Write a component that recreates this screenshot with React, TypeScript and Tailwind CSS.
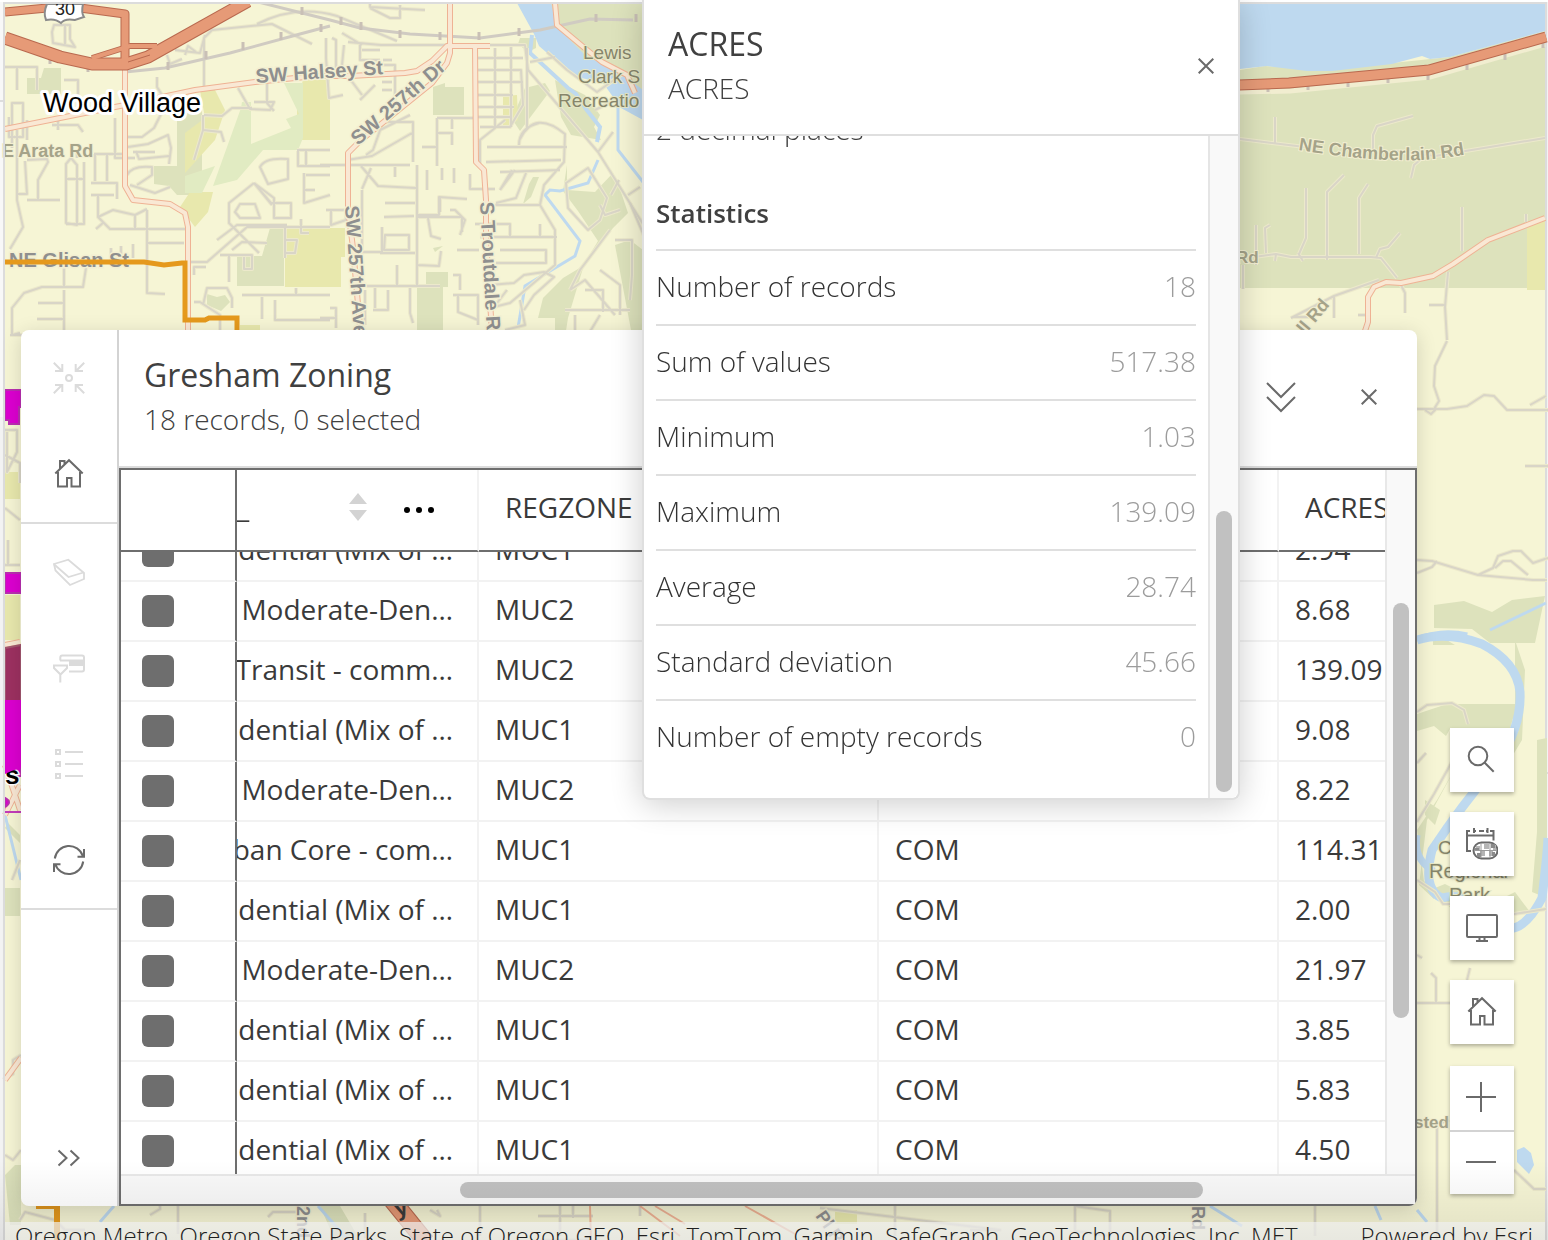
import React, { useLayoutEffect, useRef } from "react";

type IconProps = { children: React.ReactNode; size?: number };

function Icon({ children, size = 32 }: IconProps) {
  return (
    <svg
      width={size}
      height={size}
      viewBox={`0 0 ${size} ${size}`}
      fill="none"
      stroke="currentColor"
      strokeWidth="2"
      aria-hidden="true"
      className="shrink-0"
    >
      {children}
    </svg>
  );
}

const ZoomToIcon = () => (
  <Icon>
    <path d="M.8.8 9 9M2 9h7.300V2M31.200.8 23 9M30 9h-7.300V2M.8 31.200 9 23M2 23h7.300v7M31.200 31.200 23 23M30 23h-7.300v7" />
    <circle cx="16" cy="16" r="3" />
  </Icon>
);
const HomeIcon = () => (
  <Icon>
    <path d="M2.300 15.500 16 2.200l13.700 13.300M5 14v14.500h9V20h4.500v8.500H27V14M7 11V3h4.500v3.500" />
  </Icon>
);
const EraserIcon = () => (
  <Icon>
    <path d="m1 8 14.300-4.300 15.700 13.300v6L17 29 2.500 14.500z" strokeWidth="1.800" />
    <path d="M1 8.300 15.500 21 30.500 16.500" strokeWidth="1.800" />
  </Icon>
);
const FilterTableIcon = () => (
  <Icon>
    <path d="M7.300 8.500V5.500q0-2 2-2H29q2 0 2 2v12q0 2-2 2H16" />
    <path d="M16 9h15v5H16zM7 7.500h24v2H7z" fill="currentColor" stroke="none" />
    <path d="M1 13.500h13v2.500L7.500 22.500 1 16zM7.300 22v8.500" />
  </Icon>
);
const ListIcon = () => (
  <Icon>
    <path d="M3 2h4v4H3zM3 14h4v4H3zM3 26h4v4H3zM12 4h18M12 16h18M12 28h18" />
  </Icon>
);
const RefreshIcon = () => (
  <Icon>
    <path d="M1.800 14.500a14.400 14.400 0 0 1 28-2.500M30.200 17.500a14.400 14.400 0 0 1-28 2.500M31 5v7.800h-6.500M1 28v-7.800h6.500" />
  </Icon>
);
const CloseIcon = () => (
  <Icon size={16}>
    <path d="m.7.7 14.600 14.600M15.300.7.7 15.300" />
  </Icon>
);
const ExpandIcon = () => (
  <Icon size={24}>
    <path d="m1.500 4.500 8 7.500-8 7.500M13.500 4.500l8 7.500-8 7.500" />
  </Icon>
);
const CollapseDownIcon = () => (
  <Icon>
    <path d="M2 2 16 16 30 2M2 16l14 14 14-14" />
  </Icon>
);
const SearchIcon = () => (
  <Icon>
    <circle cx="12" cy="12" r="9.300" />
    <path d="m18.500 18.500 9.200 9.200" />
  </Icon>
);
const CalendarGlobeIcon = () => (
  <Icon>
    <path d="M5 23H1V3h3M8 3h2M13 3h5M20 3h2M24 3h3.500v9.500M1 7.500h26.500M8 0v5M21.500 0v5" />
    <rect x="7.500" y="14.500" width="24" height="16" rx="8" fill="#fff" />
    <path d="M10 18h4v4h-4zM18 16h5v5h-5zM27 17h3v5h-3zM14 23h5v5h-5zM23 22h4v6h-4z" fill="#b5b5b5" stroke="none" />
    <path d="M8 20h5v3H8zM11 25h4v4h-4zM25 16h4v4h-4zM26 24h3v4h-3z" fill="#8a8a8a" stroke="none" />
    <path d="M8 22.500h23M15 15v15M24 15v15" stroke="#9a9a9a" strokeWidth="1" />
  </Icon>
);
const MonitorIcon = () => (
  <Icon>
    <rect x="1" y="3" width="30" height="22" rx="1" />
    <path d="M13.500 25v4M18.500 25v4M10 29h12" />
  </Icon>
);
const PlusIcon = () => (
  <Icon>
    <path d="M0 15h30M15 0v30" />
  </Icon>
);
const MinusIcon = () => (
  <Icon>
    <path d="M0 15h30" />
  </Icon>
);

const minorRoads = [
  "M5 67h32v23M17 68v22M12 148v-45h11v34H9v-20M52 32l2-7h16v14l5 8-22-4zM65 24v20",
  "M64 80h14v26M17 130v70l6 27-13 22M27 160l20-1 1 3-10 18 0 20M17 194h10l-2-33M27 200h33M66 223v-59l5-6 6 7v60zM66 179h17M77 158v-8",
  "M84 162v62H66M94 154h28M95 154v27M107 154v27M91 183h26l0 16M91 195h23M98 195v22l12 12h75M98 217l15-7 22 5v13M135 215l12-6M96 229l8-7M147 210v83l18 1M148 243h36M111 248v14M121 246v14M133 244v14M133 152h22M127 137h15l12-9 9-18-10 0M157 77v10l10 16M128 147l20-3 20-9 3 13-2 16M136 151l3 8 30-3M127 175q5-10 25-8v8l-15 10M130 185l25 8 15-6M64 265v22M86 268l-3 19H42l-18 6-12 15v27M38 303h26M64 290v42M37 319h27M10 335h26M115 118v40h20M52 125h26l5 7M58 118v12M27 120v20",
  "M175 50l25 3 5-18M167 55l3 9 12-5M185 55l3-9 8 6M204 88V38l8-8 60-6 40 20M257 24q40-20 80-8l60 25M238 88l12 21 20 1 4-8h-20M267 83v20l7 8M204 115l18 1 10-8h20M203 115v15l-9 30M203 130l18 2 3 10M254 183l-25 20v20l30 30M254 183l20 15v20h17v-15h-20l-17-20M254 183l18 22M235 212l5-8h15l5 14h-20zM260 167q5-10 28-8v20l-20 5-8-17zM297 150h33M298 151v15h32M306 150v15M304 173v30l26-8M304 190h11M306 175h24M187 262h20l40-35h83M217 240l20-15h50M232 250l10-8 25 1M220 255h32v14h-8v-12M229 255v27M285 228v30M285 240h12l-2 13h-10M301 219v14h8M194 275v-8h12M194 302h6l20 13v15M203 305l4-17h20l5 10v10M242 295h88M262 297v22M275 300v20h55M296 288v7M12 335l8-2",
  "M348 42l33 3h144l3 25 70 82 50 80M342 33l20 12M360 45v15h20M380 50h-18M326 38v20l3 40 14-3M332 38l4 2v28M341 75l3-30M380 65h15v35M382 75h10M382 82h10M382 90h10M347 75l15 20M425 10l-55-3v-7M370 8l20 10h10V5M360 100l15-15M383 60h9M495 48v80M511 47v80M527 48v80M475 58h48M475 70h46l2 35-13 22h-30M478 82h45M478 95h35M474 107h40M475 117h35",
  "M520 139q15-30 45-5l-1 28-20 23-4 20 15 25v35l-45 38-20 5M487 147h80M486 162l75-2M480 165v-25l25-20M519 145q0-17 20-22M500 172l60-2M512 170l-12 20M540 205h-45M470 174v15h25M500 190l15-20M526 173l-10 25-20 5M475 224h35v14M480 237h77M500 250h46v13h-50M540 224v12M457 250h22M453 275h7v15M453 295h25v30M458 295v17l20 8M490 285l24-2 10-8 20-3 10 5-20 18-10 15M520 300l5 25-20 5M507 290l-10 13",
  "M320 165h90M417 165v120M366 155l7-5 10-28h30v40M380 130l30-15M347 160l25-4 40-23M437 118v48M437 133h15v12M437 147h-15M437 118h40M452 117v12M362 189l9-21M361 166l17 20 38 2M427 170v20M442 168v12M454 168v15M395 167v10M417 215h22v-18l28 2M440 197v15M417 217h45v15M428 218l3 18 10 3M450 210l5 0 10 10-5 15M362 190v62h20v-25M385 235h24v15h-25zM384 217l30-1M385 203h30M380 253h35M364 286h76M417 265l22 1 2-15M365 290v35M375 288v20M388 290v20h-15M397 265v20M410 288v25l3 10M330 308h6v20M336 318h-16M320 340h15M326 210h20v10l-15 5v-15",
  "M530 62l25-5M625 72l-28 20-30-22-20-18M595 110l20-10M598 152l15-20M619 180l-8 15M607 198l-19-30-22 15 2 25 20 22 12-10zM600 205l5 10 15-5M610 230l-30 40-10 20M615 240h17v35l-2 25M600 270l20 15v30M585 290h18v22M570 290l15-10 30 35M565 310h65M575 315v25M600 315l-15 25M628 195l12-8M630 203l15 35",
  "M1240 139l65 8M1275 117v26M1373 149v-14l4-9 36-10M1395 151l40 5 55-9 55-9M1420 160l-6 5-3 13M1306 188v50l-7 16M1327 260v-68l17-17M1359 254v-56l9-14M1376 258l4-9 8-2 12-14M1254 257l22-3 15 3h80l10 1 16 20M1266 253l-1-25 5-3M1256 225v40M1298 253l5 8M1276 254l-1 7M1400 283l5 10v20M1462 251v-44M1448 272l-3 35 2 33M1429 305h16M1526 222v-8M1291 318l43-22 45-16M1334 296v22M1294 317h16M1358 315h8M1243 265v24",
  "M1417 409h30l20-3 17-11 10 1 13 14h41M1447 341l-12 25-1 20 5 15-5 8M1425 410l6 4 6-6M1530 405l16-9M1525 466h23M1417 560l15 1 46 14 55 5h14M1478 575l15-7 5-12 15-5h8l12 12 15-5M1495 568l8-7 8 0 17 14M1417 573l15-6 5-6M1417 712l10-7 25-2 12 7 4 14M1417 822l17-28 25-45M1417 763l9-10M1417 880l18 12 8 12h7M1514 914l32-5M1417 1003h33M1436 1003v-25l-5-5M1467 980l3-12M1437 1240v-115l12-5M1514 1170l20 19h12M1417 955l5 3",
  "M5 430h12v22l-10 20v-40M5 455l15 8v20M5 508l15 12M8 540v25M5 565h15M12 880l8-20M5 1078l8-4v-14l8-5M5 1155l8 5 8-10M20 1220l5-8 30 8 10 10h20M150 1215l10-6v-9M178 1206v28M268 1217l5-5h30l3-4M365 1213v25M430 1210l10 6-3-6M480 1206v30M538 1216h55M560 1206v30M573 1206v12M640 1206v10M820 1208l180 22h-30M895 1206v30M1075 1206v25l35 5v-25l-35-5M1315 1206v30M540 1240h50",
];

const collectors = [
  "M5 129l120-24 70-15 60-8 60-6h35l55-3 12-2 15-10 15-15h43",
  "M125 68v118l8 14 37 4 15 9 3 14v110",
  "M450 3v50l-3 10-15 20-72 58-12 12v55l5 40 8 90",
  "M475 45l1 117 8 8 2 30v40l6 92",
  "M555 3l2 22 30 25 15 12 25 13 8 18",
  "M1362 340l6-18v-25l6-10 12-5 15 1 32-7 20-12 35-24 57-22",
  "M5 645l15-3M5 765l15 45M20 785l-15 30M5 1080l16-22",
];

function MapCanvas() {
  return (
    <svg
      className="absolute left-0 top-0 h-[1240px] w-[1548px] max-w-none"
      viewBox="0 0 1548 1240"
      role="img"
      aria-label="Street map of Wood Village and Troutdale"
      fontFamily="'Liberation Sans', Arial, sans-serif"
    >
      <rect width="1548" height="1240" fill="#f3f3f3" />
      <rect width="1548" height="2" fill="#fff" />
      <rect width="4" height="417" fill="#f8f8f8" />
      <rect x="3" y="2" width="1544" height="1240" fill="#dcdcdc" />
      <path d="M0 101h3M1546 773h3M1546 870h3M1330 0v2" stroke="#ddd" strokeWidth="2" />
      <rect x="5" y="4" width="1540" height="1240" fill="#f6f5d5" />

      <g fill="#dde2bc">
        <path d="M44 68h17v26H27V78h14zM177 110h25v85h-25l-8-9-15-2v-18h23zM270 228h14v58h-47v-30h25zM207 294l10 3 8-2 5 7-9 9-14-6zM433 87l12-4v4h19v28h-31zM426 272h22v15h-5v43h-26v-42h9zM520 38h16v10l-8 4-10-8zM525 88l20-5 5 8-30 40-8-12zM533 177l6 0-8 20-8 7 6-20zM433 248l10-2-8 6z" />
        <path d="M550 3h93v90l-30-10-20-10-50-50zM555 80l30 15 15 20-6 12 7 13-30-5-10-18zM567 165v25l28 2 18-19 5 10 10 30-15 15-30 40-15 50-3 19h-10v-19h-17l5-20 20-20 20-12 15-25-20-30-15-20zM615 245l15-5 13 10v80h-12z" />
        <path d="M1240 70l25-4 60 4 125-13 95-26v257H1240z" />
        <path d="M1434 605l30-4 28 11 20-12 33-4-10 47h-45l-18-14-38-1zM1433 640l12-1 10 6h-22zM1515 640l10 30-3 70-15 25 8-60zM1417 714l30-10 70 0-7 25h-60l-4 7-12-10-17 5zM1417 830l20-30 20-35-30 55-8 65 15 14v-10l-10-8zM1430 890l15-6 20 10 30 8 20-10 15 20-30 4h-40zM1537 740l10-2v160l-15-6 5-60zM1425 800l15 10-5 15-10-10z" />
        <path d="M5 888h15v28H5zM5 828l15 15v-8l-12-12zM5 1175l10-10h6v60H10zM320 1206h20l20 34h-25z" />
      </g>
      <g fill="#e8e8ad">
        <path d="M303 80h27v60h-33V100zM200 90h15l10 20-10 30-30 33v-40l20-15zM190 192h23l-5 20-13 15-15-20zM285 228h60v29h-4v30h-56zM503 96l14-1 1 25-12 7h-3zM240 325h20v8h-20z" />
        <path d="M1527 225l18-6v71h-18zM5 472h15v27H5zM5 595h15v45H5zM835 1210h22v14h-22z" />
      </g>
      <g fill="#e1ebc2">
        <path d="M284 83h19v55l-5 12h-35l-26 30-24 6 28-78 1-6h9v42l40-16-5-9 13-5zM185 176l30-10-13 27h-17z" />
      </g>
      <g fill="#bed9ef">
        <path d="M1240 3h305v28l-95 26-20 2-8-3-30 8-60 7-25 0-40-5-27 3z" />
        <path d="M517 3h34l6 24 30 30 30 13 26 20v30l-22-12-18-25-30-7-20-18-14-12-5-12z" />
        <path d="M1517 1150l7-3 7 6 3 12-5 9-12-12z" />
      </g>
      <g fill="none" stroke="#bed9ef">
        <path d="M532 35l-2 18 38 35 8 6 10 15 14 18-3 15" strokeWidth="4" />
        <path d="M598 160l-10 23-28 8-10-1-5 5 35 46-5 15-50 30-7 42M618 105v45l25 32M1490 630l56-27M1417 1210l10 12M5 815l16 65M100 1222l14-16M318 1206l30 34M1210 1206l32 20M1375 1206l6 14" strokeWidth="3" />
        <path d="M1417 640q30-9 65 4 35 18 38 48 2 38-28 78-30 35-60 80-10 40 10 48 30-8 62 30 20 5 38-30 5-40 6-60" strokeWidth="9" />
        <path d="M1417 640q25-10 50-4M1417 835q-4 25 17 36" strokeWidth="7" />
      </g>

      <g fill="none" strokeLinejoin="round">
        {minorRoads.map((d, i) => (
          <path key={i} d={d} stroke="#ece9cb" strokeWidth="4" />
        ))}
        {minorRoads.map((d, i) => (
          <path key={i} d={d} stroke="#d9d5c7" strokeWidth="2" />
        ))}
        <path d="M125 72l40-4 65-15 70-19 30-8M250 0l80 20 30 8 50 6 70 4 60-8 50-11 43 1" stroke="#d0cbc2" strokeWidth="3" />
        <path d="M168 62v8M206 51v8M243 42v8M281 32v8M302 7v8M321 24v8M341 17v8M361 22v8M400 30v8M440 32v8M479 32v8M519 28v8M596 14v8M636 14v8M50 58v6M88 66v6" stroke="#c9c0b6" strokeWidth="3" />
        <path d="M1240 92l50-1 140-14 115-33" stroke="#f1edd0" strokeWidth="5" />
        <path d="M1268 86v6M1308 84v6M1348 81v6M1388 77v6M1428 74v6M1467 64v6M1505 54v6M1543 42v6" stroke="#c9c0b6" strokeWidth="3" />
        {collectors.map((d, i) => (
          <path key={i} d={d} stroke="#efb294" strokeWidth="6" />
        ))}
        {collectors.map((d, i) => (
          <path key={i} d={d} stroke="#f9e8d4" strokeWidth="4" />
        ))}
        <path d="M590 1206l1 34M640 1206l40 30M655 1206l30 18M745 1206l50 28" stroke="#efb294" strokeWidth="2" />
        <path d="M5 38l55 19 32 7h34l22-7 100-56" stroke="#b9694f" strokeWidth="13" />
        <path d="M5 12l42-4M80 8l45 6v52" stroke="#b9694f" strokeWidth="9" />
        <path d="M92 58l38-12h27" stroke="#b9694f" strokeWidth="6" />
        <path d="M5 38l55 19 32 7h34l22-7 100-56" stroke="#e69a77" strokeWidth="11" />
        <path d="M5 12l42-4M80 8l45 6v52" stroke="#e69a77" strokeWidth="7" />
        <path d="M92 58l38-12h27" stroke="#e69a77" strokeWidth="4" />
        <path d="M128 62l22-7" stroke="#b9694f" strokeWidth="1" />
        <path d="M1239 85l50-2 140-13 117-33" stroke="#b9694f" strokeWidth="11" />
        <path d="M1239 85l50-2 140-13 117-33" stroke="#e69a77" strokeWidth="9" />
        <path d="M392 1200l34 42" stroke="#b9694f" strokeWidth="18" />
        <path d="M392 1200l34 42" stroke="#e69a77" strokeWidth="16" />
      </g>

      <g fill="#8f8f8f" fontWeight="700" fontSize="18" stroke="#f3efd2" strokeWidth="3" paintOrder="stroke">
        <text x="9" y="267" fontSize="20">NE Glisan St</text>
        <text transform="translate(256 83) rotate(-4)" fontSize="20">SW Halsey St</text>
        <text transform="translate(358 146) rotate(-41)" fontSize="20">SW 257th Dr</text>
        <text transform="translate(345 206) rotate(86)" fontSize="20">SW 257th Ave</text>
        <text transform="translate(480 202) rotate(87)" fontSize="20">S Troutdale Rd</text>
        <text transform="translate(297 1206) rotate(90)">2nd</text>
        <text transform="translate(815 1216) rotate(55)">Pl Rd</text>
        <text transform="translate(1192 1190) rotate(90)">n Rd</text>
      </g>
      <g fill="#a5a389" fontWeight="700" fontSize="17" stroke="#f3efd2" strokeWidth="2" paintOrder="stroke">
        <text x="2" y="157" fontSize="18">E Arata Rd</text>
        <text x="1236" y="263">Rd</text>
        <text x="1414" y="1128">sted</text>
        <text transform="translate(1305 335) rotate(-50)" fontSize="18">ll Rd</text>
        <path id="chamberlain" d="M1298 150q62 10 100 10 30 2 75-7" fill="none" stroke="none" />
        <text fontSize="18">
          <textPath href="#chamberlain">NE Chamberlain Rd</textPath>
        </text>
      </g>
      <g fill="#86856a" fontSize="19" stroke="#e6e7c6" strokeWidth="2" paintOrder="stroke">
        <text x="583" y="59">Lewis</text>
        <text x="578" y="83">Clark S</text>
        <text x="558" y="107">Recreatio</text>
        <text x="1438" y="854">C</text>
        <text x="1429" y="878" fontSize="20">Regional</text>
        <text x="1449" y="902" fontSize="20">Park</text>
      </g>
      <text x="397" y="1216" fontSize="24" fontWeight="700" fill="#3b3b3b" transform="rotate(-20 400 1216)">y</text>

      <path d="M5 262h139l20 3 18-2h3v57h20l4-2h28v16" fill="none" stroke="#e5991d" strokeWidth="5" />
      <path d="M36 1206h21v34" fill="none" stroke="#e5991d" strokeWidth="6" />

      <g>
        <path d="M5 390h16v17h-2v17H9v-4H5zM5 573h16v20H5z" fill="#dc00d0" stroke="#b92fb0" strokeWidth="2" />
        <path d="M5 648l16-3v63H5z" fill="#9d3161" stroke="#a3576f" strokeWidth="2" />
        <path d="M5 708h16v68H9l-4-4zM5 798q8 4 0 9z" fill="#dc00d0" stroke="#b92fb0" strokeWidth="2" />
        <path d="M5 812h16" stroke="#c33cba" strokeWidth="2" />
      </g>
      <text x="5" y="784" fontSize="26" fontWeight="700" fill="#000" stroke="#fff" strokeWidth="3" paintOrder="stroke">s</text>
      <path d="M5 700h16v68q-8 2-16 6z" fill="#dc00d0" />

      <text x="43" y="112" fontSize="27" fill="#000" stroke="#fff" strokeWidth="6" strokeLinejoin="round" paintOrder="stroke">
        Wood Village
      </text>
      <path d="M47 4h36q-2 9 1 13l-9 3q-10-2-14 3-6-5-15-3-3-7 1-16z" fill="#fff" stroke="#8b8b8b" strokeWidth="2" />
      <text x="65" y="15" fontSize="18" textAnchor="middle" fill="#222">30</text>
      <path d="M0 0h1548v2H0z" fill="#fff" />
      <path d="M3 2h1544v2H3zM3 2h2v1240H3z" fill="#dcdcdc" />
    </svg>
  );
}

const rows = [
  { zone: "dential (Mix of …", reg: "MUC1", gen: "", acres: "2.94" },
  { zone: "Moderate-Den…", reg: "MUC2", gen: "", acres: "8.68" },
  { zone: "Transit - comm…", reg: "MUC2", gen: "", acres: "139.09" },
  { zone: "dential (Mix of …", reg: "MUC1", gen: "", acres: "9.08" },
  { zone: "Moderate-Den…", reg: "MUC2", gen: "", acres: "8.22" },
  { zone: "ban Core - com…", reg: "MUC1", gen: "COM", acres: "114.31" },
  { zone: "dential (Mix of …", reg: "MUC1", gen: "COM", acres: "2.00" },
  { zone: "Moderate-Den…", reg: "MUC2", gen: "COM", acres: "21.97" },
  { zone: "dential (Mix of …", reg: "MUC1", gen: "COM", acres: "3.85" },
  { zone: "dential (Mix of …", reg: "MUC1", gen: "COM", acres: "5.83" },
  { zone: "dential (Mix of …", reg: "MUC1", gen: "COM", acres: "4.50" },
];

const stats = [
  ["Number of records", "18"],
  ["Sum of values", "517.38"],
  ["Minimum", "1.03"],
  ["Maximum", "139.09"],
  ["Average", "28.74"],
  ["Standard deviation", "45.66"],
  ["Number of empty records", "0"],
];

function SideButton({ label, muted, children }: { label: string; muted?: boolean; children: React.ReactNode }) {
  return (
    <button
      type="button"
      aria-label={label}
      disabled={muted}
      className={`flex h-24 w-24 items-center justify-center ${muted ? "text-[#dbdbdb]" : "text-[#6a6a6a]"}`}
    >
      {children}
    </button>
  );
}

function Toolbar() {
  return (
    <nav aria-label="Table actions" className="flex w-[98px] shrink-0 flex-col border-r-2 border-[#d3d3d3]">
      <div className="border-b-2 border-[#dcdcdc]">
        <SideButton label="Zoom to selection" muted><ZoomToIcon /></SideButton>
        <SideButton label="Default extent"><HomeIcon /></SideButton>
      </div>
      <div className="border-b-2 border-[#dcdcdc]">
        <SideButton label="Clear selection" muted><EraserIcon /></SideButton>
        <SideButton label="Filter selected records" muted><FilterTableIcon /></SideButton>
        <SideButton label="Select all records" muted><ListIcon /></SideButton>
        <SideButton label="Refresh"><RefreshIcon /></SideButton>
      </div>
      <div className="mt-auto">
        <SideButton label="Expand toolbar"><ExpandIcon /></SideButton>
      </div>
    </nav>
  );
}

function RecordsTable() {
  const scroller = useRef<HTMLDivElement>(null);
  useLayoutEffect(() => {
    if (scroller.current) scroller.current.scrollTop = 30;
  }, []);
  const head = "sticky top-0 z-10 h-[82px] border-b-2 border-b-[#6e6e6e] bg-white p-0 pb-1.5 text-left font-normal";
  const cell = "h-[60px] border-b-2 border-r-2 border-[#f2f2f2] p-0 pb-1";
  return (
    <div className="grid min-h-0 flex-1 grid-cols-[1fr_30px] grid-rows-[1fr_30px] border-2 border-[#6e6e6e] bg-[#f9f9f9]">
      <div ref={scroller} className="min-h-0 min-w-0 overflow-hidden">
        <table className="w-[1558px] table-fixed border-separate border-spacing-0 bg-white text-[28px] leading-9 text-[#3a3a3a]">
          <thead>
            <tr>
              <th className={`${head} w-[116px] border-r-2 border-r-[#6e6e6e]`} />
              <th className={`${head} w-[242px] border-r-2 border-r-[#f2f2f2]`}>
                <div className="flex items-center pr-[42px]">
                  <span>_</span>
                  <button type="button" aria-label="Sort" className="ml-auto text-[#d3d3d3]">
                    <svg width="18" height="28" viewBox="0 0 18 28" fill="currentColor" aria-hidden="true" className="block">
                      <path d="M0 11 9 0l9 11zM0 17h18l-9 11z" />
                    </svg>
                  </button>
                  <button type="button" aria-label="Column options" className="ml-9 mt-1.5 text-black">
                    <svg width="32" height="8" viewBox="0 0 32 8" fill="currentColor" aria-hidden="true" className="block">
                      <circle cx="4" cy="4" r="3" />
                      <circle cx="16" cy="4" r="3" />
                      <circle cx="28" cy="4" r="3" />
                    </svg>
                  </button>
                </div>
              </th>
              <th className={`${head} w-[400px] border-r-2 border-r-[#f2f2f2]`}>
                <div className="pl-[26px]">REGZONE</div>
              </th>
              <th className={`${head} w-[400px] border-r-2 border-r-[#f2f2f2]`} />
              <th className={`${head} w-[400px]`}>
                <div className="pl-[26px]">ACRES</div>
              </th>
            </tr>
          </thead>
          <tbody>
            {rows.map((row, i) => (
              <tr key={i}>
                <td className="h-[60px] border-b-2 border-r-2 border-b-[#f2f2f2] border-r-[#6e6e6e] p-0">
                  <input
                    type="checkbox"
                    aria-label={`Select record ${i + 1}`}
                    className="ml-[21px] block size-8 appearance-none rounded-md bg-[#6e6e6e]"
                  />
                </td>
                <td className={cell}>
                  <div className="flex justify-end overflow-hidden whitespace-nowrap pr-6">{row.zone}</div>
                </td>
                <td className={cell}><div className="pl-4">{row.reg}</div></td>
                <td className={cell}><div className="pl-4">{row.gen}</div></td>
                <td className={cell}><div className="pl-4">{row.acres}</div></td>
              </tr>
            ))}
          </tbody>
        </table>
      </div>
      <div className="border-l-2 border-[#e8e8e8] px-1.5 pt-[133px]">
        <div className="h-[415px] w-4 rounded-full bg-[#c1c1c1]" />
      </div>
      <div className="col-span-2 border-t-2 border-[#e8e8e8] py-1.5 pl-[339px] pr-[212px]">
        <div className="h-4 rounded-full bg-[#c1c1c1]" />
      </div>
    </div>
  );
}

function TablePanel() {
  return (
    <section
      aria-label="Gresham Zoning table"
      className="flex min-w-0 flex-1 overflow-hidden rounded-lg bg-white shadow-[0_4px_20px_rgba(0,0,0,0.15)]"
    >
      <Toolbar />
      <div className="flex min-w-0 flex-1 flex-col">
        <header className="flex h-[138px] shrink-0 items-center border-b-2 border-[#dcdcdc] pb-0.5 pl-[25px] pr-10 text-[#404040]">
          <div>
            <h2 className="text-[32px] leading-10">Gresham Zoning</h2>
            <p className="mt-1 text-[28px] font-light leading-10">18 records, 0 selected</p>
          </div>
          <button type="button" aria-label="Collapse" className="ml-auto text-[#6a6a6a]"><CollapseDownIcon /></button>
          <button type="button" aria-label="Close table" className="ml-16 text-[#6a6a6a]"><CloseIcon /></button>
        </header>
        <RecordsTable />
      </div>
    </section>
  );
}

function MapControls() {
  const button = "flex size-16 items-center justify-center bg-white text-[#6a6a6a]";
  return (
    <aside aria-label="Map controls" className="mb-3 ml-[33px] mr-[34px] flex w-16 shrink-0 flex-col gap-5 self-end">
      <button type="button" aria-label="Search" className={`${button} shadow-[0_2px_4px_rgba(0,0,0,0.3)]`}><SearchIcon /></button>
      <button type="button" aria-label="Time zone" className={`${button} shadow-[0_2px_4px_rgba(0,0,0,0.3)]`}><CalendarGlobeIcon /></button>
      <button type="button" aria-label="Full screen" className={`${button} shadow-[0_2px_4px_rgba(0,0,0,0.3)]`}><MonitorIcon /></button>
      <button type="button" aria-label="Home" className={`${button} shadow-[0_2px_4px_rgba(0,0,0,0.3)]`}><HomeIcon /></button>
      <div className="mt-0.5 shadow-[0_2px_4px_rgba(0,0,0,0.3)]">
        <button type="button" aria-label="Zoom in" className={button}><PlusIcon /></button>
        <button type="button" aria-label="Zoom out" className={`${button} border-t-2 border-[#d3d3d3]`}><MinusIcon /></button>
      </div>
    </aside>
  );
}

function FieldPopup() {
  return (
    <section
      role="dialog"
      aria-label="ACRES"
      className="absolute left-[642px] top-0 z-20 flex h-[800px] w-[598px] flex-col rounded-b-lg border-2 border-t-0 border-[#dfdfdf] bg-white text-[#404040] shadow-[0_4px_32px_rgba(0,0,0,0.2)]"
    >
      <header className="flex h-[136px] shrink-0 items-center border-b-2 border-[#dfdfdf] pb-0.5 pl-6 pr-6">
        <div>
          <h2 className="text-[32px] leading-10">ACRES</h2>
          <p className="mt-1 text-[28px] font-light leading-10">ACRES</p>
        </div>
        <button type="button" aria-label="Close" className="ml-auto text-[#6a6a6a]"><CloseIcon /></button>
      </header>
      <div className="flex min-h-0 flex-1">
        <div className="flex min-w-0 flex-1 flex-col justify-end overflow-hidden pb-6 pl-3 pr-3 text-[28px] leading-9">
          <p className="font-light">2 decimal places</p>
          <h3 className="mb-[18px] mt-12 text-[26px] font-semibold">Statistics</h3>
          <dl className="font-light text-[#333]">
            {stats.map(([name, value]) => (
              <div key={name} className="flex h-[75px] items-center justify-between border-t-2 border-[#dfdfdf] pb-1">
                <dt>{name}</dt>
                <dd className="text-[#9c9c9c]">{value}</dd>
              </div>
            ))}
          </dl>
        </div>
        <div className="flex w-[30px] shrink-0 flex-col justify-end rounded-br-lg border-l-2 border-[#e5e5e5] bg-[#f9f9f9] px-1.5 pb-1.5">
          <div className="h-[281px] w-4 rounded-full bg-[#c1c1c1]" />
        </div>
      </div>
    </section>
  );
}

export default function App() {
  return (
    <main className="relative h-screen overflow-hidden bg-white font-['Open_Sans',sans-serif]">
      <MapCanvas />
      <div className="relative flex h-full flex-col">
        <div className="flex min-h-0 flex-1 pb-4 pl-[21px] pt-[330px]">
          <TablePanel />
          <MapControls />
        </div>
        <footer className="ml-[5px] mr-[3px] flex h-[18px] shrink-0 justify-between overflow-hidden whitespace-nowrap bg-white/70 pl-2.5 pr-3 text-[24px] font-light leading-7 text-[#222]">
          <span className="min-w-0">
            Oregon Metro, Oregon State Parks, State of Oregon GEO, Esri, TomTom, Garmin, SafeGraph, GeoTechnologies, Inc, MET…
          </span>
          <a href="#esri" className="shrink-0">Powered by Esri</a>
        </footer>
      </div>
      <FieldPopup />
      <div className="pointer-events-none absolute inset-x-0 bottom-0 h-20 bg-linear-to-t from-black/8 to-transparent" />
    </main>
  );
}
